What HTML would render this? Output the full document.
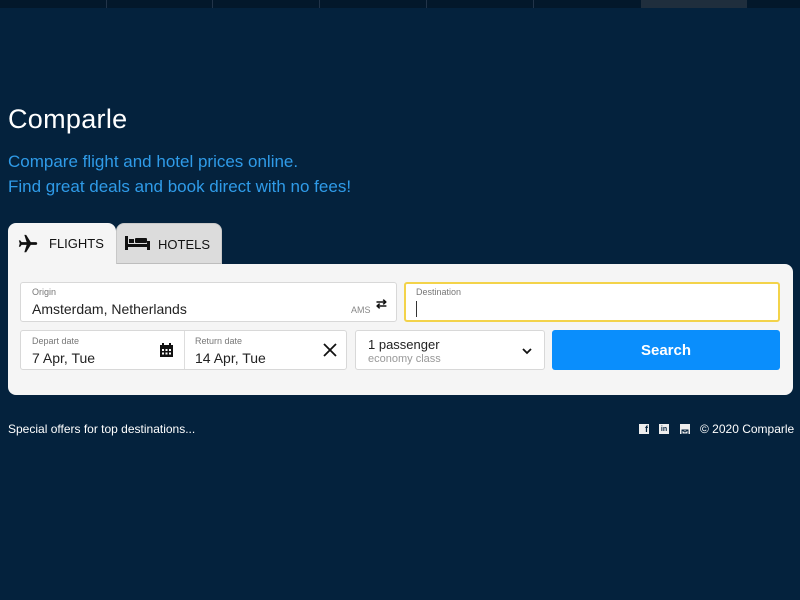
<!DOCTYPE html>
<html><head><style>
*{box-sizing:border-box;margin:0;padding:0}
body{width:800px;height:600px;background:#04223d;font-family:"Liberation Sans",sans-serif;position:relative;overflow:hidden}
.top{position:absolute;left:0;top:0;width:800px;height:8px;background:#03182b}
.sep{position:absolute;top:0;width:1px;height:8px;background:#223449}
.abs{position:absolute}
h1{position:absolute;left:8px;top:104px;color:#fff;font-size:27px;font-weight:normal;letter-spacing:0.3px}
.sub{position:absolute;left:8px;top:149px;color:#2f9be8;font-size:17px;line-height:25px}
.tab{position:absolute;top:223px;height:42px;border-radius:8px 8px 0 0;font-size:13px;color:#111;display:flex;align-items:center}
.card{position:absolute;left:8px;top:264px;width:785px;height:131px;background:#f5f5f5;border-radius:0 8px 8px 8px}
.f{position:absolute;background:#fff;border:1px solid #d8d8d8;border-radius:3px}
.lbl{position:absolute;font-size:9px;color:#777}
.val{position:absolute;font-size:14px;color:#222}
.foot{position:absolute;top:422px;color:#fff;font-size:12px}
</style></head><body>
<div class="top"></div>
<div class="sep" style="left:106px"></div><div class="sep" style="left:212px"></div><div class="sep" style="left:319px"></div><div class="sep" style="left:426px"></div><div class="sep" style="left:533px"></div>
<div class="abs" style="left:641px;top:0;width:106px;height:8px;background:#1f2e3d"></div>
<h1>Comparle</h1>
<div class="sub">Compare flight and hotel prices online.<br>Find great deals and book direct with no fees!</div>
<div class="tab" style="left:116px;width:106px;background:#dcdcdc;border:1px solid #c8c8c8;border-bottom:2px solid #bdbdbd">
<svg class="abs" style="left:8px;top:11px" width="25" height="16" viewBox="0 0 25 16"><rect x="0" y="1" width="3" height="14" fill="#111"/><rect x="0" y="9" width="25" height="3" fill="#111"/><rect x="22" y="6" width="3" height="9" fill="#111"/><rect x="4" y="4" width="5" height="4" fill="#111"/><rect x="10" y="3" width="12" height="5" rx="1" fill="#111"/></svg>
<span class="abs" style="left:41px;top:13px">HOTELS</span></div>
<div class="tab" style="left:8px;width:108px;background:#f5f5f5">
<svg class="abs" style="left:9px;top:10px" width="22" height="22" viewBox="0 0 24 24"><path d="M21 16v-2l-8-5V3.5a1.5 1.5 0 0 0-3 0V9l-8 5v2l8-2.5V19l-2 1.5V22l3.5-1 3.5 1v-1.5L13 19v-5.5z" transform="rotate(90 12 12)" fill="#111"/></svg>
<span class="abs" style="left:41px;top:13px">FLIGHTS</span></div>
<div class="card"></div>
<div class="f" style="left:20px;top:282px;width:377px;height:40px"><span class="lbl" style="left:11px;top:4px">Origin</span><span class="val" style="left:11px;top:18px">Amsterdam, Netherlands</span><span class="lbl" style="left:330px;top:22px;font-size:9px;color:#888">AMS</span><span class="abs" style="left:355px;top:13px;font-size:13px;font-weight:bold;color:#111">⇄</span></div>
<div class="f" style="left:404px;top:282px;width:376px;height:40px;border:2px solid #f3d34a"><span class="lbl" style="left:10px;top:3px">Destination</span><div class="abs" style="left:10px;top:17px;width:1px;height:16px;background:#333"></div></div>
<div class="f" style="left:20px;top:330px;width:327px;height:40px"><span class="lbl" style="left:11px;top:5px">Depart date</span><span class="val" style="left:11px;top:19px">7 Apr, Tue</span>
<svg class="abs" style="left:139px;top:12px" width="13" height="14" viewBox="0 0 13 14"><rect x="0" y="2" width="13" height="12" fill="#111"/><rect x="2" y="0" width="2" height="3" fill="#111"/><rect x="9" y="0" width="2" height="3" fill="#111"/><g fill="#fff"><rect x="2" y="6" width="2" height="2"/><rect x="5.5" y="6" width="2" height="2"/><rect x="9" y="6" width="2" height="2"/><rect x="2" y="9.5" width="2" height="2"/><rect x="5.5" y="9.5" width="2" height="2"/><rect x="9" y="9.5" width="2" height="2"/></g></svg>
<div class="abs" style="left:163px;top:0;width:1px;height:38px;background:#ddd"></div>
<span class="lbl" style="left:174px;top:5px">Return date</span><span class="val" style="left:174px;top:19px">14 Apr, Tue</span>
<svg class="abs" style="left:302px;top:12px" width="14" height="14" viewBox="0 0 14 14"><path d="M1 1L13 13M13 1L1 13" stroke="#111" stroke-width="1.8"/></svg></div>
<div class="f" style="left:355px;top:330px;width:190px;height:40px"><span class="val" style="left:12px;top:6px;font-size:13px">1 passenger</span><span class="abs" style="left:12px;top:22px;font-size:11px;color:#999">economy class</span>
<svg class="abs" style="left:166px;top:17px" width="10" height="7" viewBox="0 0 10 7"><path d="M1 1l4 4 4-4" stroke="#111" stroke-width="1.8" fill="none"/></svg></div>
<div class="abs" style="left:552px;top:330px;width:228px;height:40px;background:#0a8efc;border-radius:3px;color:#fff;font-size:15px;font-weight:bold;text-align:center;line-height:42px">Search</div>
<div class="foot" style="left:8px">Special offers for top destinations...</div>
<div class="abs" style="left:639px;top:424px;width:10px;height:10px;background:#eee;color:#04223d;font-size:9px;font-weight:bold;line-height:11px;text-align:right;padding-right:1px">f</div>
<div class="abs" style="left:659px;top:424px;width:10px;height:10px;background:#eee;color:#04223d;font-size:7px;font-weight:bold;line-height:11px;text-align:center">in</div>
<div class="abs" style="left:680px;top:424px;width:10px;height:10px;background:#eee"><svg width="10" height="10"><rect x="2" y="3" width="6" height="4" fill="none" stroke="#04223d" stroke-width="1"/><path d="M2 3l3 2 3-2" stroke="#04223d" fill="none"/></svg></div>
<div class="foot" style="left:700px">© 2020 Comparle</div>
</body></html>
